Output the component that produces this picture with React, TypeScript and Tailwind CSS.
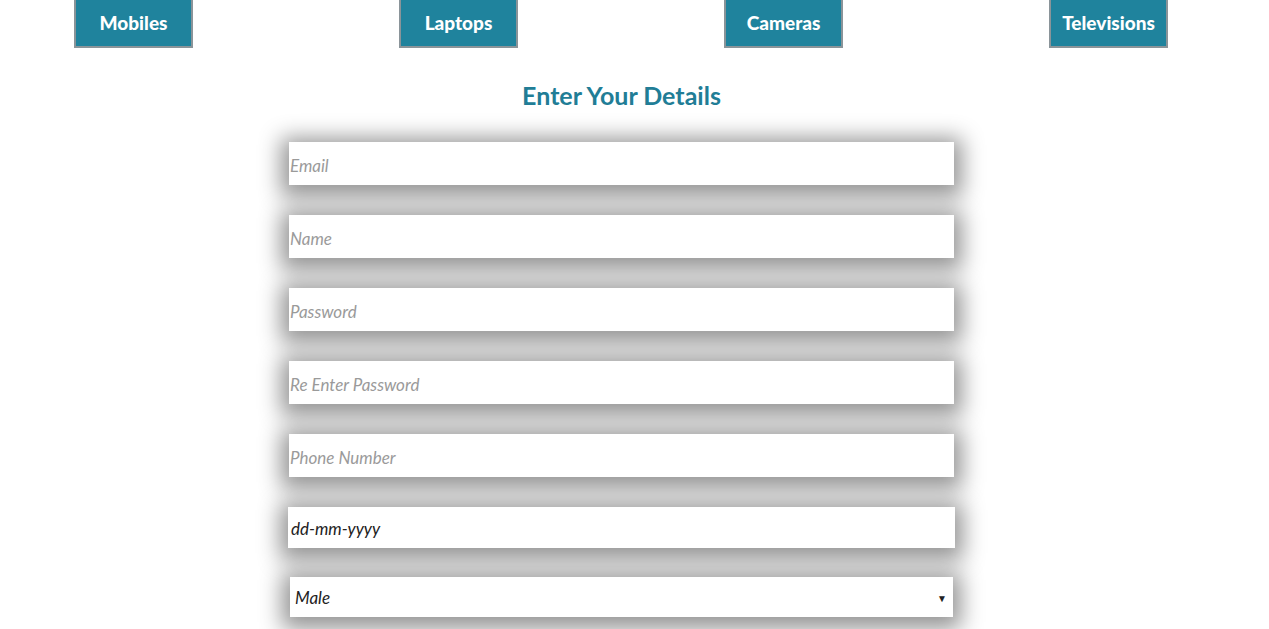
import React from "react";

const font = { fontFamily: "Lato, 'Open Sans', sans-serif" };

export default function App() {
  const cats = ["Mobiles", "Laptops", "Cameras", "Televisions"];
  const fields = ["Email", "Name", "Password", "Re Enter Password", "Phone Number"];
  return (
    <div className="w-[1269px] h-[629px] overflow-hidden bg-white" style={font}>
      <div className="flex gap-[206px] pl-[74px]">
        {cats.map((c) => (
          <div
            key={c}
            className="w-[119px] h-[48px] bg-[#1f839d] border-x-2 border-b-2 border-[#8a9499] flex items-center justify-center text-white font-black text-[19px]"
          >
            {c}
          </div>
        ))}
      </div>
      <h1 className="text-center text-[#217d96] font-bold text-[25px] mt-[32px] ml-[-26px] leading-[30px]">
        Enter Your Details
      </h1>
      <div className="flex flex-col items-start pl-[289px] mt-[32px] gap-[30px]">
        {fields.map((f) => (
          <input
            key={f}
            placeholder={f}
            className="w-[665px] h-[43px] bg-white outline-none italic text-[17px] pl-[1px] pt-[3px] placeholder:text-[#9a9a9a] text-[#222] shadow-[0_4px_22px_8px_rgba(0,0,0,0.42)]"
          />
        ))}
        <div className="w-[667px] h-[41px] -ml-[1px] bg-white flex items-center pl-[3px] pt-[2px] italic text-[17px] text-[#222] shadow-[0_4px_22px_8px_rgba(0,0,0,0.42)]">
          dd-mm-yyyy
        </div>
        <div className="w-[663px] h-[40px] -mt-[1px] ml-[1px] bg-white flex items-center justify-between pl-[5px] pr-[6px] pt-[2px] italic text-[17px] text-[#222] shadow-[0_4px_22px_8px_rgba(0,0,0,0.42)]">
          <span>Male</span>
          <span className="not-italic text-[10px]">▼</span>
        </div>
      </div>
    </div>
  );
}
